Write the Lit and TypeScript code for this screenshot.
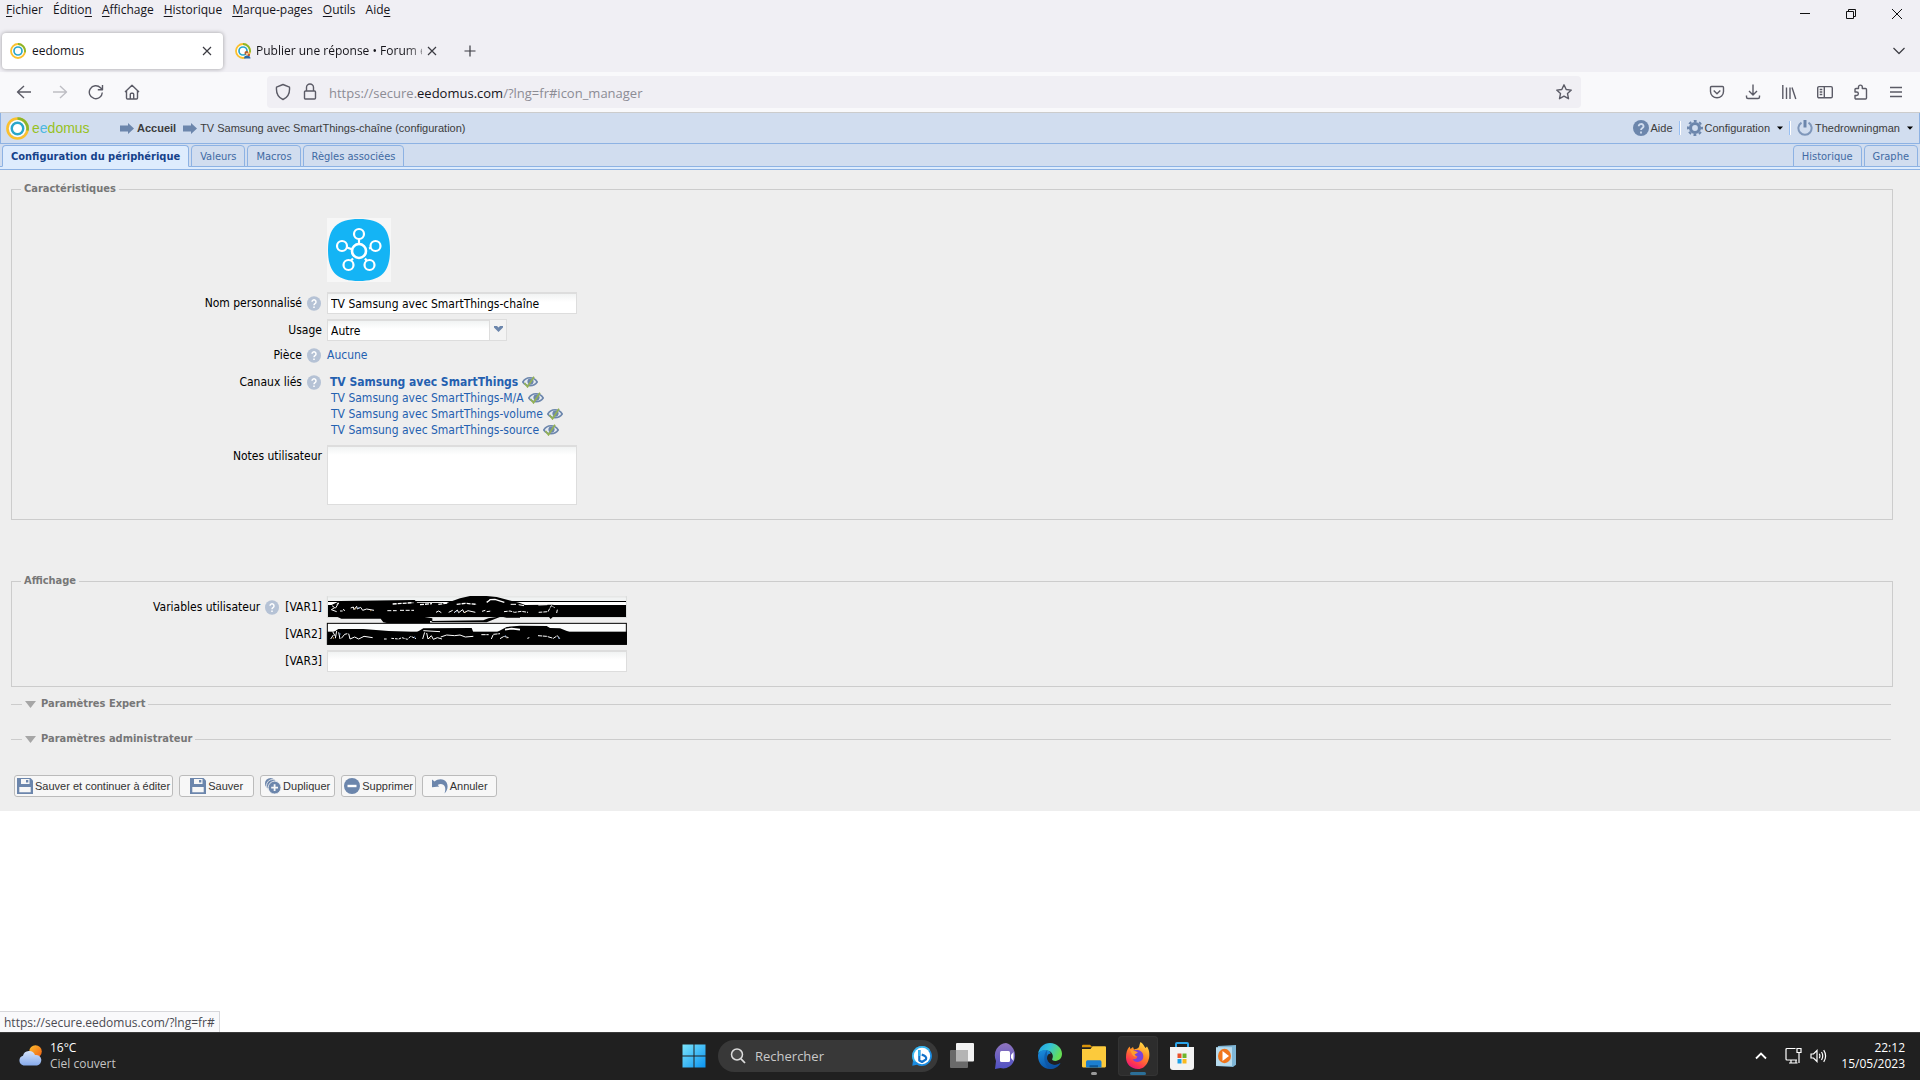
import { LitElement, html, css } from "lit";
import { customElement } from "lit/decorators.js";

/* ---------- icons ---------- */

const ring = (size: number) => html`<svg width=${size} height=${size} viewBox="0 0 16 16" fill="none" aria-hidden="true">
  <circle cx="8" cy="8" r="5.9" fill="#fff" />
  <circle cx="8" cy="8" r="7" stroke="#fbc02d" stroke-width="1.8" />
  <path d="M8 1A7 7 0 0 1 14.9 9.4" stroke="#8ab62b" stroke-width="1.8" />
  <circle cx="8" cy="8" r="4" stroke="#2ba6cb" stroke-width="1.7" />
</svg>`;

const forumIcon = html`<svg width="16" height="16" viewBox="0 0 16 16" fill="none" aria-hidden="true">
  <circle cx="8" cy="8" r="7" fill="#fff" stroke="#fbc02d" stroke-width="1.8" />
  <path d="M8 1A7 7 0 0 1 14.9 9.4" stroke="#8ab62b" stroke-width="1.8" />
  <circle cx="8" cy="8" r="4" stroke="#2ba6cb" stroke-width="1.7" />
  <circle cx="11.5" cy="10" r="2" fill="#b3592c" />
  <circle cx="12" cy="11" r="1.2" fill="#f3c59b" />
  <path d="M9 15.5c0-2 1-3 3-3s3.500 1 3.500 3z" fill="#2b6aa8" />
  <circle cx="14" cy="12" r="1" fill="#c0392b" />
</svg>`;

const line = (w: number, h: number, d: string, cls = "") => html`<svg class="ln ${cls}" width=${w} height=${h} viewBox="0 0 ${w} ${h}" aria-hidden="true"><path d=${d} /></svg>`;

const I = {
  close: line(10, 10, "M1 1L9 9M9 1L1 9"),
  plus: line(12, 12, "M6 .5V11.5M.5 6H11.500"),
  back: line(16, 16, "M15 8H1.500M8 2L1.500 8L8 14"),
  forward: line(16, 16, "M1 8H14.500M8 2L14.500 8L8 14", "dim"),
  reload: line(16, 16, "M14.300 8.500A6.500 6.500 0 1 1 12.500 3.700L14.300 5.500M14.500 1V5.700H9.800"),
  home: line(16, 16, "M1 8L8 1.200L15 8M2.500 6.800V14a1 1 0 0 0 1 1H12.500a1 1 0 0 0 1-1V6.800M6.300 15V10.300a1 1 0 0 1 1-1H8.700a1 1 0 0 1 1 1V15"),
  shield: line(16, 18, "M8 1.500L14.500 4.200C15 10 12.500 14.500 8 16.500C3.500 14.500 1 10 1.500 4.200Z"),
  lock: line(14, 18, "M3.500 8V4.500a3.500 3.500 0 0 1 7 0V8M2.500 8H11.500a1 1 0 0 1 1 1V15a1 1 0 0 1-1 1H2.500a1 1 0 0 1-1-1V9a1 1 0 0 1 1-1Z"),
  star: line(18, 18, "M9 1.800L11.200 6.500L16.300 7.100L12.500 10.600L13.500 15.700L9 13.200L4.500 15.700L5.500 10.600L1.700 7.100L6.800 6.500Z"),
  pocket: line(16, 16, "M2.500 2.500H13.500a1 1 0 0 1 1 1V7.500a6.500 6.300 0 0 1-13 0V3.500a1 1 0 0 1 1-1ZM4.700 6.500L8 9.700L11.300 6.500"),
  download: line(16, 16, "M8 .5V10.500M4 7L8 11L12 7M1.500 11.500V13a1.500 1.500 0 0 0 1.500 1.500H13a1.500 1.500 0 0 0 1.500-1.500V11.500"),
  library: line(16, 16, "M1.800 1V15M5.500 3.500V15M9 3.500V15M11 3.500L14.800 15"),
  sidebar: line(16, 16, "M2 2.600H14a1.300 1.300 0 0 1 1.300 1.300V12.500a1.300 1.300 0 0 1-1.300 1.300H2A1.300 1.300 0 0 1 .7 12.500V3.900A1.300 1.300 0 0 1 2 2.600ZM7.300 2.600V13.800M2.700 5.500H5.300M2.700 8H5.300M2.700 10.500H5.300"),
  puzzle: line(16, 16, "M5.500 4.500V3a1.900 1.900 0 0 1 3.800 0V4.500H12.500a1 1 0 0 1 1 1V14a1 1 0 0 1-1 1H3a1 1 0 0 1-1-1V11.500H3.600a1.700 1.700 0 0 0 0-3.500H2V5.500a1 1 0 0 1 1-1Z"),
  menu: line(14, 14, "M1 2.500H13M1 7H13M1 11.500H13"),
  chevron: line(14, 10, "M1.500 2L7 7.500L12.500 2"),
};

const arrow = html`<svg width="14" height="11" viewBox="0 0 14 11" aria-hidden="true"><path d="M0 2.500H8V0L14 5.500L8 11V8.500H0Z" fill="#6c86ac" /></svg>`;
const caret = html`<svg width="6" height="4" viewBox="0 0 6 4" aria-hidden="true"><path d="M0 .5H6L3 3.700Z" fill="#000" /></svg>`;

const helpBig = html`<svg width="16" height="16" viewBox="0 0 16 16" fill="none" aria-hidden="true"><circle cx="8" cy="8" r="8" fill="#6c86ac" />
  <path d="M5.700 6.200a2.400 2.200 0 1 1 3.600 1.900C8.400 8.600 8 9 8 9.900M8 11.600V13.400" stroke="#d1ddef" stroke-width="1.800" /></svg>`;
const gear = html`<svg width="16" height="16" viewBox="0 0 16 16" fill="none" aria-hidden="true">
  <circle cx="8" cy="8" r="4.500" stroke="#6c86ac" stroke-width="3.200" />
  <circle cx="8" cy="8" r="7" stroke="#6c86ac" stroke-width="2" stroke-dasharray="2.900 2.600" stroke-dashoffset="1.450" /></svg>`;
const power = html`<svg width="16" height="16" viewBox="0 0 16 16" fill="none" aria-hidden="true">
  <path d="M4.500 2.600A6.600 6.600 0 1 0 11.500 2.600" stroke="#7f97ba" stroke-width="2" /><path d="M8 0V7.500" stroke="#6c86ac" stroke-width="3" /></svg>`;
const help = html`<svg width="14" height="15" viewBox="0 0 14 15" fill="none" role="img" aria-label="?"><ellipse cx="7" cy="7.500" rx="7" ry="7.300" fill="#b5c2d5" />
  <path d="M5 5.800a2 2 0 1 1 3 1.800C7.300 8.100 7 8.400 7 9.200M7 10.600V12.100" stroke="#fff" stroke-width="1.500" /></svg>`;
const eye = html`<svg width="16" height="12" viewBox="0 0 16 12" fill="none" aria-hidden="true">
  <path d="M.8 6C4 .4 12 .4 15.200 6C12 11 4 11 .8 6Z" fill="#e6ebf1" stroke="#6c86ac" stroke-width="1.600" />
  <circle cx="8.500" cy="5.600" r="3.100" fill="#6c86ac" />
  <path d="M2.500 7L5.500 10.800L12 .8" stroke="#93b155" stroke-width="1.700" /></svg>`;
const tri = html`<svg width="11" height="7" viewBox="0 0 11 7" aria-hidden="true"><path d="M0 0H11L5.500 7Z" fill="#a6a6a6" /></svg>`;

const smart = html`<svg class="device" width="64" height="64" viewBox="0 0 64 64" fill="none" role="img" aria-label="SmartThings">
  <rect width="64" height="64" fill="#f7f7f7" />
  <path d="M32 1C54 1 63 10 63 32S54 63 32 63S1 54 1 32S10 1 32 1Z" fill="#14b4f5" />
  <g stroke="#fff" stroke-width="2.200"><circle cx="32" cy="33" r="7" stroke-width="2.600" />
  <circle cx="32" cy="16" r="5" /><circle cx="15" cy="28" r="5" /><circle cx="48.500" cy="28" r="5" /><circle cx="21.500" cy="47" r="5" /><circle cx="42.500" cy="47" r="5" />
  <path d="M32 21V26M20 29.500L25.500 31.500M42 30.500L44 29.800M24 42.500L26 40.500M39.500 42.500L38 40.500" /></g></svg>`;

const floppy = html`<svg width="16" height="16" viewBox="0 0 16 16" aria-hidden="true"><path d="M0 0H13.500L16 2.500V16H0Z" fill="#6c86ac" />
  <path d="M4 1H12.500V6H4ZM2.300 9H13.700V14.300H2.300Z" fill="#f7f7f7" /><path d="M9 2H11.300V4.500H9Z" fill="#6c86ac" /></svg>`;
const dup = html`<svg width="16" height="16" viewBox="0 0 16 16" fill="none" aria-hidden="true"><circle cx="5.500" cy="5.500" r="5.500" fill="#6c86ac" />
  <circle cx="7.500" cy="7.500" r="6" fill="#6c86ac" stroke="#f7f7f7" stroke-width=".8" /><circle cx="9.600" cy="9.600" r="6.400" fill="#6c86ac" stroke="#f7f7f7" stroke-width=".8" />
  <path d="M9.600 6.200V13M6.200 9.600H13" stroke="#f7f7f7" stroke-width="1.800" /></svg>`;
const minus = html`<svg width="16" height="16" viewBox="0 0 16 16" fill="none" aria-hidden="true"><circle cx="8" cy="8" r="8" fill="#6c86ac" /><path d="M3.500 8H12.500" stroke="#fff" stroke-width="2.400" /></svg>`;
const undo = html`<svg width="16" height="16" viewBox="0 0 16 16" aria-hidden="true"><path d="M0 1.500L2.600 3.600C6 .3 12 .2 14.600 4.500C16.500 8 15.500 12.500 12.500 15.500C14 11 13.300 8 11.300 6.700C9.500 5.600 7.300 5.900 5.600 6.900L7.300 8.500L0 9.300Z" fill="#6c86ac" /></svg>`;

/* Black marker strokes lying over the first two variable fields. */
const marker = html`<svg class="marker" width="300" height="49" viewBox="21 21 900 147" fill="none" aria-hidden="true">
  <rect x="22" y="22" width="898" height="64" fill="#fff" />
  <path d="M22 24H920M22 85H920M22 22V86M919 22V86" stroke="#d8dad9" stroke-width="3" />
  <rect x="24" y="27" width="894" height="9" fill="#f1f3f3" />
  <rect x="24" y="36" width="894" height="3" fill="#000" />
  <rect x="24" y="48" width="894" height="36" fill="#000" />
  <rect x="22" y="103" width="897" height="63" fill="#fbfcfc" stroke="#000" stroke-width="3" />
  <rect x="22" y="128" width="899" height="39" fill="#000" />
  <g fill="#000">
    <path d="M30 50L60 36L284 33L292 41L380 42L420 28L450 21H500L530 24L600 42L615 48L700 47L700 60H30Z" />
    <path d="M24 82H48L64 89H182L190 100L200 102H330L337 96V88L300 82ZM330 96L490 94L505 88L545 82L500 100H330ZM684 80L692 90L702 80ZM540 82H600V86H560Z" />
    <path d="M40 130L55 120H130L206 126L290 130L310 118L455 117L460 130H530L560 114L600 110L680 111L690 117L720 118L750 130Z" />
  </g>
  <path d="M508 32L525 31L553 40M510 33L500 40" stroke="#fff" stroke-width="4" />
  <path d="M555 122L575 119L600 122" stroke="#fff" stroke-width="5" />
  <g stroke="#fff" stroke-width="3">
    <path d="M36 50L44 56L34 62L50 68M50 46L56 42L46 58M60 66H68M70 60L74 66" />
    <path d="M92 57L100 54L102 62L110 52L112 60L122 55L128 64L140 60L162 64" />
    <path d="M202 65H230M240 64H282" stroke-dasharray="12 5" />
    <path d="M348 70L356 66L364 71M386 70L398 64M402 71L412 63L416 71L428 62L432 71L444 65L466 70" />
    <path d="M218 45L280 41M300 47L336 44M355 46L384 42M410 46L436 43L470 46" stroke-width="4" stroke-dasharray="12 3" />
    <path d="M486 67L496 64M500 68L514 66M552 68L570 66L584 70L604 67L624 70M656 70L684 68L694 50L704 56M712 62L710 72" stroke-dasharray="11 3" />
    <path d="M572 46H588M596 47L612 50M655 48L682 47" />
    <path d="M32 150L40 138M38 128L46 142M50 126L46 148M56 130L60 150M64 148L74 136L82 134M86 134L90 150L104 144L116 150L132 142L158 146" />
    <path d="M192 150H200M214 148L236 150L246 146L262 151L272 142L288 149" stroke-dasharray="8 3" />
    <path d="M308 150L314 130M320 132L324 150L334 140L340 151L352 146L366 150M310 125L360 128" />
    <path d="M362 144L380 138L404 140L420 138L436 144L460 142" />
    <path d="M484 137H506M514 150L520 136L540 134M540 149L552 142L566 146M622 148L628 146M654 140L680 142L700 148L712 140L720 150" stroke-dasharray="13 2" />
  </g>
  <g stroke="#e6b36a" stroke-width="2"><path d="M106 62V56M150 65H154M40 150V144M330 150V146M436 72V68M560 148H562" /></g>
  <g stroke="#7aa6e6" stroke-width="2"><path d="M116 60V54M60 132V138M284 148V142M408 70V66M716 150V144M556 138V142" /></g>
</svg>`;

/* taskbar pictograms */
const T = {
  start: html`<svg width="24" height="24" viewBox="0 0 24 24"><defs><linearGradient id="st" x1="0" y1="0" x2="1" y2="1"><stop stop-color="#7be4fb" /><stop offset="1" stop-color="#0a93f0" /></linearGradient></defs>
    <path d="M.5.5H11.500V11.500H.5ZM12.500.5H23.500V11.500H12.500ZM.5 12.500H11.500V23.500H.5ZM12.500 12.500H23.500V23.500H12.500Z" fill="url(#st)" /></svg>`,
  search: html`<svg width="16" height="16" viewBox="0 0 16 16" fill="none"><circle cx="7" cy="6.500" r="5.500" stroke="#dcdcdc" stroke-width="1.500" fill="#4a4a4a" /><path d="M11 10.800L15 15" stroke="#dcdcdc" stroke-width="1.800" /></svg>`,
  bing: html`<svg width="20" height="20" viewBox="0 0 20 20" fill="none"><path d="M10 0A10 10 0 1 1 5 18.700L.3 19.800L1 14.300A10 10 0 0 1 10 0Z" fill="#1a8be0" />
    <path d="M10 0A10 10 0 0 1 18 4L3 16L1 14.300A10 10 0 0 1 10 0Z" fill="#3cb7ee" /><circle cx="10" cy="10" r="8.200" fill="#fff" />
    <path d="M7.300 4V14.500L10 16L14 13.300C15 11 13 9.500 9.700 8.600" stroke="#1271c9" stroke-width="2.200" stroke-linejoin="round" /><path d="M7.300 4V10" stroke="#31b3ee" stroke-width="2.200" /></svg>`,
  tasks: html`<svg width="24" height="26" viewBox="0 0 24 26"><rect x="6" y="0" width="18" height="18.500" rx="1" fill="#f2f2f2" /><rect x="0" y="7" width="18" height="18" rx="1" fill="#6a6a6a" /><path d="M6 7H18V18.500H6Z" fill="#b4b4b4" /></svg>`,
  chat: html`<svg width="24" height="26" viewBox="0 0 24 26"><defs><linearGradient id="ch" x1="0" y1="0" x2="0" y2="1"><stop stop-color="#8f74bd" /><stop offset="1" stop-color="#4f51c4" /></linearGradient></defs>
    <path d="M12 0A11.500 12.500 0 1 1 6.500 25L1 26L2 18A11.500 12.500 0 0 1 12 0Z" fill="url(#ch)" /><rect x="6" y="8" width="10" height="11" rx="1.500" fill="#fff" /><path d="M17 12L19.500 9V18L17 15Z" fill="#fff" /></svg>`,
  edge: html`<svg width="24" height="26" viewBox="0 0 24 24" preserveAspectRatio="none"><defs><linearGradient id="e1" x1="0" y1="0" x2="1" y2=".4"><stop stop-color="#1c9de8" /><stop offset=".5" stop-color="#35c1d6" /><stop offset="1" stop-color="#65de55" /></linearGradient><linearGradient id="e2" x1="0" y1="0" x2=".4" y2="1"><stop stop-color="#1a8fe0" /><stop offset="1" stop-color="#0b55a8" /></linearGradient></defs>
    <path d="M0 10C1 4 6 0 12 0C19 0 24 5 24 10C24 14 21 16.500 17.500 16.500C15 16.500 13.500 15.700 14.300 14.500C16 12 14 7.500 9 7C5 6.700 1 8 0 10Z" fill="url(#e1)" />
    <path d="M0 11C1 7.500 5 6.300 8.500 6.600C12 7 13 9 12.500 10C10 10 9 12 9 14C9 18 14 20.500 18 20.300C20 20 21.500 19 22.500 18.500C20 22.500 16 24 12 24C5 24 0 18.500 0 12Z" fill="url(#e2)" />
    <path d="M9 7C5 10 5 20 12 24C18 24 21.500 21 22.500 18.500C15 22.500 8.500 18 9 13.500Z" fill="#0d4f9b" opacity=".6" /></svg>`,
  folder: html`<svg width="24" height="26" viewBox="0 0 24 24" preserveAspectRatio="none"><path d="M0 2.500Q0 1.500 1 1.500H8L10.500 4H0Z" fill="#d9930b" /><path d="M0 5.500H8.500L10.500 3H23Q24 3 24 4V21.500Q24 22.500 23 22.500H1Q0 22.500 0 21.500Z" fill="#fcca3c" /><path d="M4 22.500V17.500Q4 16 5.500 16H18Q19.500 16 19.500 17.500V22.500Z" fill="#1c7fd0" /><path d="M7.500 22.500V20.500H16V22.500Z" fill="#0c5797" /></svg>`,
  firefox: html`<svg width="24" height="28" viewBox="0 0 24 28"><defs><linearGradient id="ff" x1=".8" y1="0" x2=".3" y2="1"><stop stop-color="#ffe34a" /><stop offset=".45" stop-color="#ff8a24" /><stop offset=".8" stop-color="#ff3750" /><stop offset="1" stop-color="#e5177c" /></linearGradient></defs>
    <path d="M14.500 0C17 1.500 18 4 19.500 6L21 4.500C24 9 24 15 22 19.500C20 24.500 16 27 12 27C5 27 0 22 0 15.500C0 11 1 7 3.500 4.500L4.500 7L7 5L8 7.500C10 6.500 12 7 13 5Q13.500 2 14.500 0Z" fill="url(#ff)" />
    <path d="M5 8.500L12 8C17 9 18.500 14 16.500 17.500C14 21 8 20.500 6.500 17C9 18 11 16.500 11.500 14.500C9 14 7.500 12 5 8.500Z" fill="#7b42d8" /><path d="M4 8C6 7 9 9 12 10.500L8.500 12.500L10 14.500C7 15 6 12 4 8Z" fill="#ff9d2e" /></svg>`,
  store: html`<svg width="24" height="28" viewBox="0 0 24 28" fill="none"><path d="M6 7V2Q6 1 7 1H17Q18 1 18 2V7" stroke="#2aa4ea" stroke-width="2" /><path d="M0 5H24V25Q24 28 21 28H3Q0 28 0 25Z" fill="#f3f3f3" /><path d="M7.500 11.500H11.500V16H7.500Z" fill="#e8502a" /><path d="M12.500 11.500H16.500V16H12.500Z" fill="#6fb52b" /><path d="M7.500 17H11.500V21.500H7.500Z" fill="#1ba0e8" /><path d="M12.500 17H16.500V21.500H12.500Z" fill="#fab91c" /></svg>`,
  media: html`<svg width="20" height="22" viewBox="0 0 20 20" preserveAspectRatio="none"><path d="M2 1L20 0V18L17 20L0 19Z" fill="#7fb6d6" /><path d="M0 2H16V19H0Z" fill="#b7dbee" /><circle cx="8.500" cy="10" r="6.500" fill="#f0751b" /><path d="M6.500 5.500L13 10L6.500 14.500Z" fill="#fff" /></svg>`,
};

const weather = html`<svg width="25" height="21" viewBox="0 0 25 21" aria-hidden="true"><defs><linearGradient id="sn" x1="0" y1="0" x2="1" y2="1"><stop stop-color="#fdc02f" /><stop offset="1" stop-color="#ee5c13" /></linearGradient><linearGradient id="cl" x1="0" y1="0" x2="0" y2="1"><stop stop-color="#d4e3fb" /><stop offset="1" stop-color="#86aaeb" /></linearGradient></defs>
  <circle cx="17.500" cy="6.500" r="6.300" fill="url(#sn)" /><path d="M5.500 20.500A5 5 0 0 1 5 10.800A6.300 6.300 0 0 1 17 10A5.300 5.300 0 1 1 19 20.500Z" fill="url(#cl)" /></svg>`;

const menus: [string, string, string][] = [
  ["", "F", "ichier"], ["Éditio", "n", ""], ["", "A", "ffichage"], ["", "H", "istorique"], ["", "M", "arque-pages"], ["", "O", "utils"], ["Aid", "e", ""],
];
const channels = [["TV Samsung avec SmartThings", true], ["TV Samsung avec SmartThings-M/A", false], ["TV Samsung avec SmartThings-volume", false], ["TV Samsung avec SmartThings-source", false]] as const;

@customElement("app-root")
export class AppRoot extends LitElement {
  static styles = css`
    :host { display: flex; flex-direction: column; min-height: 100vh; background: #fff; color: #15141a; font: 12px/16px "Open Sans", "Noto Sans", sans-serif; }
    * { box-sizing: border-box; }
    svg { display: block; flex: none; }
    button { font: inherit; color: inherit; background: none; border: 0; padding: 0; margin: 0; display: inline-flex; align-items: center; justify-content: center; }
    a { text-decoration: none; color: inherit; }
    .ln { fill: none; stroke: #5b5b66; stroke-width: 1.4; stroke-linejoin: round; }
    .ln.dim { stroke: #bebec4; }
    .spacer { flex: 1; }

    .chrome { background: #f0eff4; }
    .menubar { display: flex; align-items: flex-start; height: 32px; padding: 2px 17px 0 6px; gap: 10px; }
    .menubar u { text-underline-offset: 2px; }
    .win { display: flex; gap: 34px; padding-top: 6px; }
    .win button { width: 12px; height: 12px; }
    .win svg { fill: none; stroke: #111; stroke-width: 1; }
    .tabs { display: flex; align-items: center; height: 40px; padding: 0 14px 3px 2px; }
    .btab { display: flex; align-items: center; height: 36px; padding: 0 11px 0 8px; gap: 6px; border-radius: 4px; }
    .btab.on { width: 221px; background: #fff; box-shadow: 0 0 4px rgba(0, 0, 0, .35); }
    .btab.off { width: 225px; padding-left: 12px; gap: 5px; }
    .btab .t { flex: 1; overflow: hidden; white-space: nowrap; }
    .btab.off .t { mask-image: linear-gradient(90deg, #000 148px, transparent 180px); }
    .btab .ln, .tabs .ln { stroke-width: 1.2; stroke: #3b3b42; }
    .newtab { margin-left: 16px; }
    .nav { display: flex; align-items: center; height: 41px; background: #f9f9fb; border-bottom: 1px solid #ccc; padding: 0 17px 0 16px; }
    .navset { display: flex; gap: 20px; width: 251px; }
    .url { display: flex; align-items: center; flex: 1; height: 32px; padding: 0 8px; gap: 12px; background: #f0eff4; border-radius: 4px; font-size: 13px; color: #8c8c94; margin-right: 128px; }
    .url .addr { flex: 1; white-space: nowrap; padding-top: 1px; }
    .url b { font-weight: 400; color: #15141a; }
    .tools { display: flex; gap: 20px; align-items: center; }

    .crumbs { display: flex; align-items: center; height: 31px; background: #d1ddef; border: solid #8db2e3; border-width: 0 1px 1px; padding: 0 6px 0 5px; font: 11px/16px "Liberation Sans", Arial, sans-serif; color: #3c3c3c; }
    .logo { display: flex; align-items: center; gap: 3px; width: 114px; font-size: 14px; color: #97c11f; }
    .logo i { font-style: normal; color: #4db8e0; }
    .crumb { display: flex; align-items: center; gap: 3px; margin-right: 7px; }
    .top { display: flex; align-items: center; gap: 2px; }
    .top svg:last-child:not(:first-child) { margin-left: 5px; }
    .sep { width: 2px; height: 14px; margin: 0 6px; background: #fff; border-left: 1px solid #98c0f4; }
    .ptabs { display: flex; align-items: flex-end; gap: 2px; height: 27px; padding: 0 2px 0 2px; background: linear-gradient(#d1ddef 22px, #8db2e3 22px, #8db2e3 23px, #deecfd 23px, #deecfd 25px, #8db2e3 25px, #8db2e3 26px, #eee 26px); font: 11px/14px var(--ui); color: #416aa3; --ui: "DejaVu Sans Condensed", "Noto Sans", sans-serif; }
    .ptabs button { height: 22px; padding: 1px 8px 0; margin-bottom: 4px; border: 1px solid #8db2e3; border-radius: 4px 4px 0 0; background: #d1ddef; white-space: nowrap; }
    .ptabs .on { background: #deecfd; font-weight: 700; color: #15428b; border-bottom-color: #deecfd; }

    main { --ui: "DejaVu Sans Condensed", "Noto Sans", sans-serif; background: #eee; padding: 11px 27px 14px 11px; font: 12px/16px var(--ui); color: #000; }
    fieldset { margin: 0; min-width: 0; border: 1px solid #ccc; padding: 0 0 9px; }
    legend { margin-left: 9px; padding: 0 3px; height: 14px; font: 700 11px/14px var(--ui); color: #777; }
    .show { margin-top: 54px; }
    .closed { border-width: 1px 0 0; padding: 0; margin: 10px 2px 0 0; }
    .closed + .closed { margin-top: 21px; }
    .closed legend { margin-left: 11px; }
    .closed button { gap: 5px; }
    .row { display: grid; grid-template-columns: 310px 1fr; column-gap: 5px; margin-bottom: 5px; }
    .pic { padding-top: 22px; margin-bottom: 10px; }
    .device { grid-column: 2; }
    .lab { display: flex; justify-content: flex-end; align-items: center; gap: 5px; height: 22px; }
    .lab svg { margin-right: 1px; }
    .low .lab, .low a { height: 18px; line-height: 18px; }
    .row:has(ul) .lab { height: 18px; }
    .low { padding-bottom: 4px; }
    .box { width: 250px; height: 22px; border: 1px solid #ddd; border-top-width: 2px; padding: 1px 3px 0; background: linear-gradient(#f1f3f3, #fff 8px); font: 12px/16px var(--ui); color: #000; outline: 0; border-radius: 0; }
    textarea.box { display: block; height: 60px; resize: none; }
    .pick { position: relative; width: 180px; }
    .pick select { width: 180px; appearance: none; }
    .pick .trig { position: absolute; right: 1px; top: 1px; width: 17px; height: 20px; padding: 6px 4px; background: #f3f3f3; border-left: 1px solid #ddd; pointer-events: none; }
    main a { color: #2460b0; }
    ul { list-style: none; margin: 0; padding: 1px 0 2px 4px; }
    li { display: flex; align-items: center; gap: 4px; height: 16px; }
    li.first { font-weight: 700; margin-left: -1px; }
    .vars { position: relative; padding-top: 8px; }
    .vars .box { width: 300px; }
    .marker { position: absolute; left: 315px; top: 8px; overflow: visible; pointer-events: none; }
    .btns { display: flex; gap: 6px; margin: 29px 0 0 3px; }
    .btns button { height: 22px; min-width: 75px; padding: 0 2px; gap: 2px; background: #f7f7f7; border: 1px solid #bbb; border-radius: 3px; font: 11px/14px "Liberation Sans", Arial, sans-serif; color: #333; white-space: nowrap; }

    .rest { flex: 1; display: flex; align-items: flex-end; }
    .status { height: 21px; padding: 3px 4px 0; background: #f9f9fb; border: solid #d7d7db; border-width: 1px 1px 0 0; color: #4a4a52; }
    .bar { display: grid; grid-template-columns: 1fr auto 1fr; align-items: center; height: 48px; padding: 0 15px 2px 18px; background: #202020; border-top: 1px solid #3a3a3a; color: #fff; }
    .weather { display: flex; gap: 7px; align-items: center; justify-self: start; text-align: left; }
    .weather span span { color: #c4c4c4; display: block; }
    .apps { display: flex; align-items: center; gap: 4px; margin-right: 3px; }
    .apps button { position: relative; width: 40px; height: 40px; border-radius: 4px; }
    .apps .on { background: #2d2d2d; box-shadow: inset 0 0 0 1px #343434; }
    .apps .run::after, .apps .on::after { content: ""; position: absolute; bottom: 1px; width: 6px; height: 3px; border-radius: 2px; background: #9a9a9a; }
    .apps .on::after { width: 16px; background: #2b6f98; }
    .find { display: flex; align-items: center; width: 220px; height: 32px; border-radius: 16px; background: #383838; padding: 0 6px 0 12px; gap: 9px; }
    .find input { flex: 1; min-width: 0; border: 0; background: none; outline: 0; padding: 0; font: 13px/20px "Open Sans", "Noto Sans", sans-serif; color: #fff; }
    .find input::placeholder { color: #c9c9c9; opacity: 1; }
    .tray { display: flex; align-items: center; justify-content: flex-end; gap: 8px; text-align: right; }
    .tray svg { fill: none; stroke: #fff; stroke-width: 1.2; }
    .tray .up { margin-right: 9px; }
    .clock { margin-left: 6px; }
  `;

  render() {
    return html`
      <header class="chrome">
        <div class="menubar">
          ${menus.map(([a, k, b]) => html`<button>${a}<u>${k}</u>${b}</button>`)}
          <span class="spacer"></span>
          <div class="win">
            <button aria-label="Réduire"><svg width="12" height="12"><path d="M1 5.500H11" /></svg></button>
            <button aria-label="Restaurer"><svg width="12" height="12"><path d="M1.500 3.500H8.500V10.500H1.500ZM3.500 3.500V1.500H10.500V8.500H8.500" /></svg></button>
            <button aria-label="Fermer"><svg width="12" height="12"><path d="M1 1L11 11M11 1L1 11" /></svg></button>
          </div>
        </div>
        <div class="tabs">
          <div class="btab on">${ring(16)}<span class="t">eedomus</span><button aria-label="Fermer l'onglet">${I.close}</button></div>
          <div class="btab off">${forumIcon}<span class="t">Publier une réponse • Forum ee</span><button aria-label="Fermer l'onglet">${I.close}</button></div>
          <button class="newtab" aria-label="Nouvel onglet">${I.plus}</button>
          <span class="spacer"></span>
          <button aria-label="Lister les onglets">${I.chevron}</button>
        </div>
        <div class="nav">
          <div class="navset">
            <button aria-label="Précédent">${I.back}</button><button aria-label="Suivant">${I.forward}</button>
            <button aria-label="Actualiser">${I.reload}</button><button aria-label="Accueil">${I.home}</button>
          </div>
          <div class="url">${I.shield}${I.lock}<span class="addr">https://secure.<b>eedomus.com</b>/?lng=fr#icon_manager</span><button aria-label="Marque-page">${I.star}</button></div>
          <div class="tools">
            <button aria-label="Pocket">${I.pocket}</button><button aria-label="Téléchargements">${I.download}</button><button aria-label="Bibliothèque">${I.library}</button>
            <button aria-label="Panneau latéral">${I.sidebar}</button><button aria-label="Extensions">${I.puzzle}</button><button aria-label="Menu">${I.menu}</button>
          </div>
        </div>
      </header>

      <nav class="crumbs">
        <a class="logo" href="#">${ring(23)}<span>e<i>e</i>domus</span></a>
        <a class="crumb" href="#">${arrow}<strong>Accueil</strong></a>
        <a class="crumb" href="#">${arrow}<span>TV Samsung avec SmartThings-chaîne (configuration)</span></a>
        <span class="spacer"></span>
        <button class="top">${helpBig}Aide</button><span class="sep"></span>
        <button class="top">${gear}Configuration ${caret}</button><span class="sep"></span>
        <button class="top">${power}Thedrowningman ${caret}</button>
      </nav>
      <div class="ptabs">
        <button class="on">Configuration du périphérique</button><button>Valeurs</button><button>Macros</button><button>Règles associées</button>
        <span class="spacer"></span><button>Historique</button><button>Graphe</button>
      </div>

      <main>
        <fieldset>
          <legend>Caractéristiques</legend>
          <div class="row pic">${smart}</div>
          <div class="row"><label class="lab" for="nom">Nom personnalisé ${help}</label><input class="box" id="nom" value="TV Samsung avec SmartThings-chaîne" /></div>
          <div class="row"><label class="lab" for="usage">Usage</label>
            <div class="pick"><select class="box" id="usage"><option>Autre</option></select>
              <span class="trig"><svg width="9" height="6" viewBox="0 0 9 6"><path d="M0 0H3L4.500 1.500L6 0H9V1.500L4.500 6L0 1.500Z" fill="#6c86ac" /></svg></span></div></div>
          <div class="row low"><span class="lab">Pièce ${help}</span><a href="#">Aucune</a></div>
          <div class="row"><span class="lab">Canaux liés ${help}</span>
            <ul>${channels.map(([t, f]) => html`<li class=${f ? "first" : ""}><a href="#">${t}</a>${eye}</li>`)}</ul></div>
          <div class="row"><label class="lab" for="notes">Notes utilisateur</label><textarea class="box" id="notes"></textarea></div>
        </fieldset>

        <fieldset class="show">
          <legend>Affichage</legend>
          <div class="vars">
            <div class="row"><label class="lab" for="v1">Variables utilisateur ${help} [VAR1]</label><input class="box" id="v1" /></div>
            <div class="row"><label class="lab" for="v2">[VAR2]</label><input class="box" id="v2" /></div>
            <div class="row"><label class="lab" for="v3">[VAR3]</label><input class="box" id="v3" /></div>
            ${marker}
          </div>
        </fieldset>
        <fieldset class="closed"><legend><button>${tri}Paramètres Expert</button></legend></fieldset>
        <fieldset class="closed"><legend><button>${tri}Paramètres administrateur</button></legend></fieldset>

        <div class="btns">
          <button>${floppy}Sauver et continuer à éditer</button><button>${floppy}Sauver</button><button>${dup}Dupliquer</button><button>${minus}Supprimer</button><button>${undo}Annuler</button>
        </div>
      </main>

      <div class="rest"><div class="status">https://secure.eedomus.com/?lng=fr#</div></div>

      <footer class="bar">
        <button class="weather">${weather}<span>16°C<span>Ciel couvert</span></span></button>
        <div class="apps">
          <button aria-label="Démarrer">${T.start}</button>
          <label class="find">${T.search}<input placeholder="Rechercher" aria-label="Rechercher" />${T.bing}</label>
          <button aria-label="Vue des tâches">${T.tasks}</button><button aria-label="Conversation">${T.chat}</button><button aria-label="Edge">${T.edge}</button>
          <button class="run" aria-label="Explorateur">${T.folder}</button><button class="on" aria-label="Firefox">${T.firefox}</button>
          <button aria-label="Store">${T.store}</button><button aria-label="Lecteur">${T.media}</button>
        </div>
        <div class="tray">
          <button class="up" aria-label="Icônes cachées"><svg width="14" height="10" viewBox="0 0 14 10"><path d="M2 7.500L7 2.500L12 7.500" stroke-width="1.800" /></svg></button>
          <button aria-label="Réseau"><svg width="17" height="17" viewBox="0 0 17 17"><path d="M10.500 1.500H2Q1 1.500 1 2.500V12Q1 13 2 13H12M6 13V16M11 13V16M4 16H12.500M12 1.500H16V5.500H12ZM14 5.500V16" /></svg></button>
          <button aria-label="Volume"><svg width="17" height="14" viewBox="0 0 17 14"><path d="M1 5H3.500L7 1.500V12.500L3.500 9H1ZM9.300 4.800Q10.500 7 9.300 9.200M11.500 3Q14 7 11.500 11M13.700 1.200Q17.500 7 13.700 12.800" /></svg></button>
          <time class="clock">22:12<br />15/05/2023</time>
        </div>
      </footer>
    `;
  }
}
